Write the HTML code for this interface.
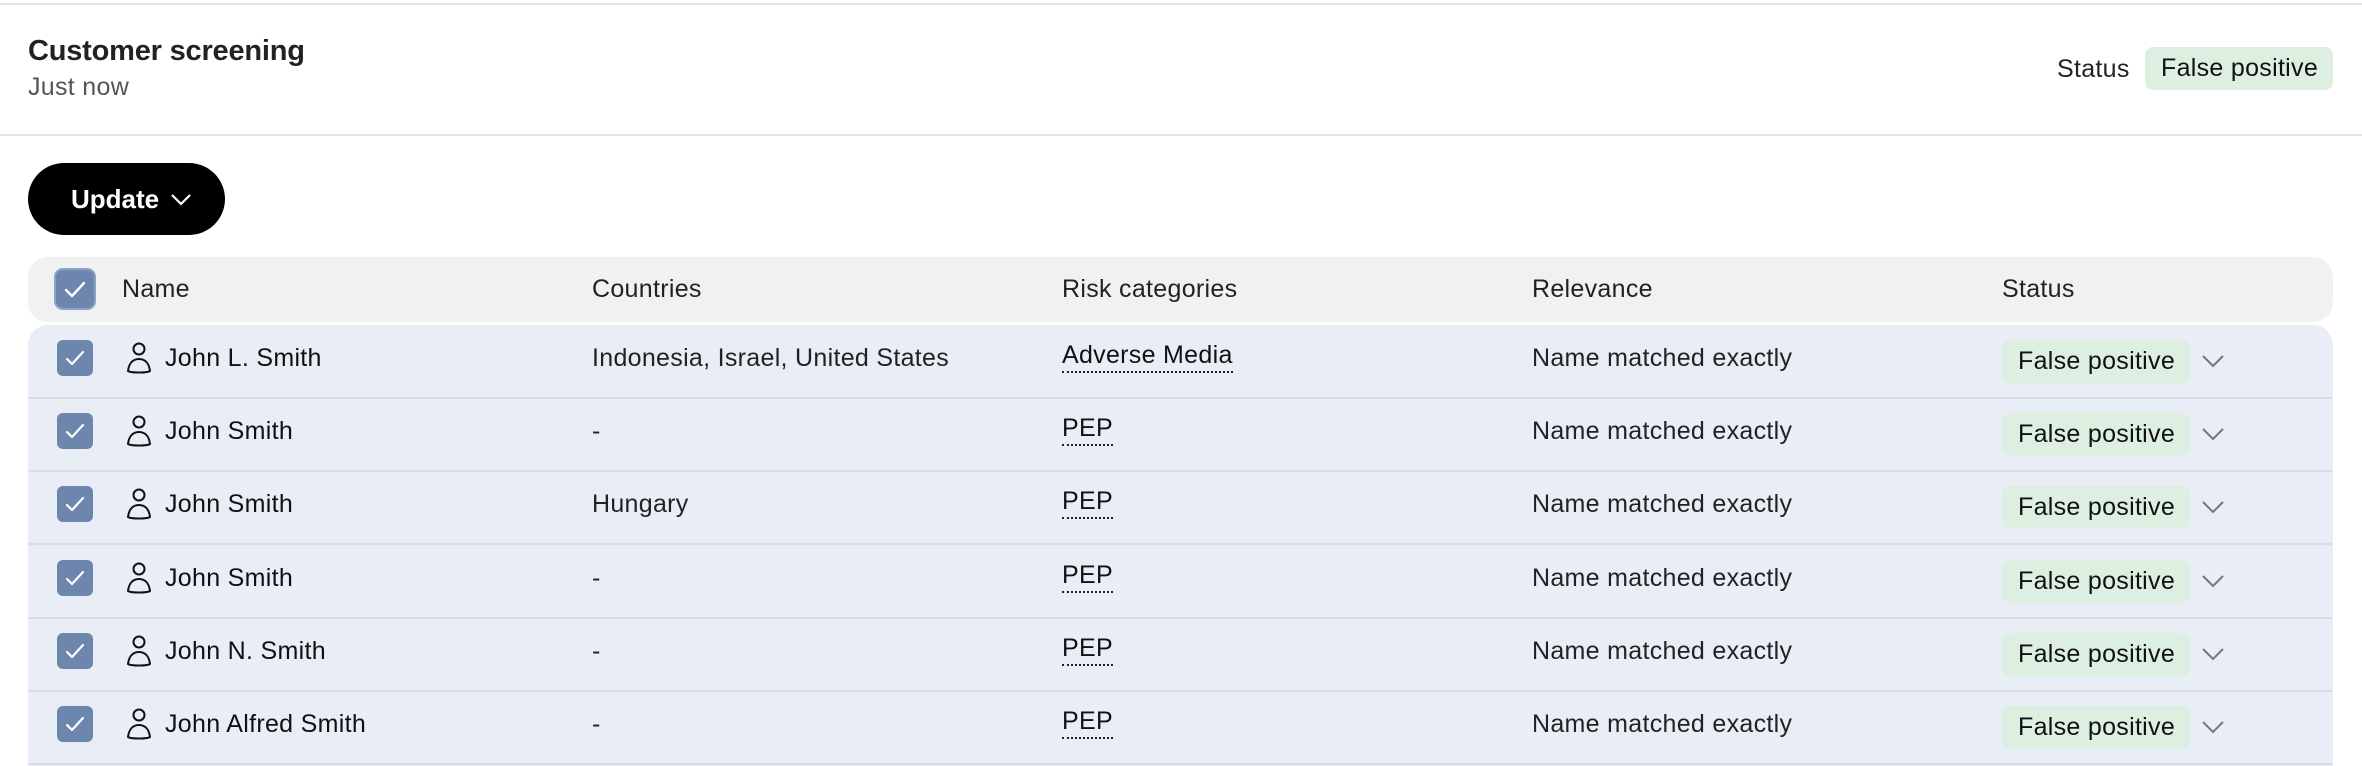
<!DOCTYPE html>
<html><head><meta charset="utf-8"><style>
*{box-sizing:border-box;margin:0;padding:0}
body{width:2362px;height:766px;background:#fff;font-family:"Liberation Sans",sans-serif;color:#111;position:relative;overflow:hidden}
.abs{position:absolute}
.t{position:absolute;font-size:25px;line-height:30px;white-space:nowrap;letter-spacing:0.3px}
.pill{position:absolute;background:#dcefe0;border-radius:8px;height:43px;width:188px;font-size:25px;line-height:43px;padding-left:16px;color:#111;letter-spacing:0.3px}
.cb{position:absolute;width:36px;height:36px;border-radius:6px;background:#6d86ad}
.risk{border-bottom:2px dotted #222;line-height:26px;padding-bottom:3px}
</style></head><body>
<div class="abs" style="left:0;top:3px;width:2362px;height:2px;background:#e3e4e8"></div>
<div class="t" style="left:28px;top:36px;font-size:29px;font-weight:bold;color:#222;letter-spacing:-0.2px">Customer screening</div>
<div class="t" style="left:28px;top:72px;color:#555">Just now</div>
<div class="t" style="left:2057px;top:54px;color:#222">Status</div>
<div class="pill" style="left:2145px;top:47px">False positive</div>
<div class="abs" style="left:0;top:134px;width:2362px;height:2px;background:#e3e4e8"></div>
<div class="abs" style="left:28px;top:163px;width:197px;height:72px;border-radius:36px;background:#000"></div>
<div class="t" style="left:71px;top:184px;color:#fff;font-weight:bold;font-size:26px;letter-spacing:0">Update</div>
<svg class="abs" style="left:170px;top:192px" width="22" height="14" viewBox="0 0 22 14"><path d="M2 3l9 9 9-9" fill="none" stroke="#fff" stroke-width="2.2"/></svg>
<div class="abs" style="left:28px;top:257px;width:2305px;height:65px;border-radius:20px;background:#f0f1f3"></div>
<div class="abs" style="left:54px;top:268px;width:42px;height:42px;border-radius:9px;background:#6d86ad;border:2px solid #8ea2c4"></div>
<svg class="abs" style="left:54px;top:268px" width="42" height="42" viewBox="0 0 42 42"><path d="M12 22l6 6 12-13" fill="none" stroke="#fff" stroke-width="2.4" stroke-linecap="round" stroke-linejoin="round"/></svg>
<div class="t" style="left:122px;top:274px;color:#222">Name</div>
<div class="t" style="left:592px;top:274px;color:#222">Countries</div>
<div class="t" style="left:1062px;top:274px;color:#222">Risk categories</div>
<div class="t" style="left:1532px;top:274px;color:#222">Relevance</div>
<div class="t" style="left:2002px;top:274px;color:#222">Status</div>
<div class="abs" style="left:28px;top:325px;width:2305px;height:441px;border-radius:20px 20px 0 0;background:#e8edf6"></div>
<div id="rows"></div>
<script>
var d=[["John L. Smith","Indonesia, Israel, United States","Adverse Media"],["John Smith","-","PEP"],["John Smith","Hungary","PEP"],["John Smith","-","PEP"],["John N. Smith","-","PEP"],["John Alfred Smith","-","PEP"]];
var h="";
d.forEach(function(r,i){var y=325+i*73.2;
h+='<div class="cb" style="left:57px;top:'+(y+15)+'px"></div>';
h+='<svg class="abs" style="left:57px;top:'+(y+15)+'px" width="36" height="36" viewBox="0 0 36 36"><path d="M10 19l5 5 11-12" fill="none" stroke="#fff" stroke-width="2.2" stroke-linecap="round" stroke-linejoin="round"/></svg>';
h+='<svg class="abs" style="left:124px;top:'+(y+15)+'px" width="30" height="36" viewBox="0 0 30 36"><circle cx="15" cy="9" r="5.5" fill="none" stroke="#111" stroke-width="2"/><path d="M4 31c1-8 5-12 11-12s10 4 11 12c-3 2-19 2-22 0z" fill="none" stroke="#111" stroke-width="2" stroke-linejoin="round"/></svg>';
h+='<div class="t" style="left:165px;top:'+(y+18)+'px">'+r[0]+'</div>';
h+='<div class="t" style="left:592px;top:'+(y+18)+'px;color:#222">'+r[1]+'</div>';
h+='<div class="t risk" style="left:1062px;top:'+(y+17)+'px">'+r[2]+'</div>';
h+='<div class="t" style="left:1532px;top:'+(y+18)+'px;color:#222">Name matched exactly</div>';
h+='<div class="pill" style="left:2002px;top:'+(y+15)+'px">False positive</div>';
h+='<svg class="abs" style="left:2201px;top:'+(y+28)+'px" width="24" height="16" viewBox="0 0 24 16"><path d="M2 3l10 10 10-10" fill="none" stroke="#777" stroke-width="2"/></svg>';
h+='<div class="abs" style="left:28px;top:'+(y+72)+'px;width:2305px;height:2px;background:#d8dee8"></div>';
});
document.getElementById("rows").innerHTML=h;
</script>
</body></html>
